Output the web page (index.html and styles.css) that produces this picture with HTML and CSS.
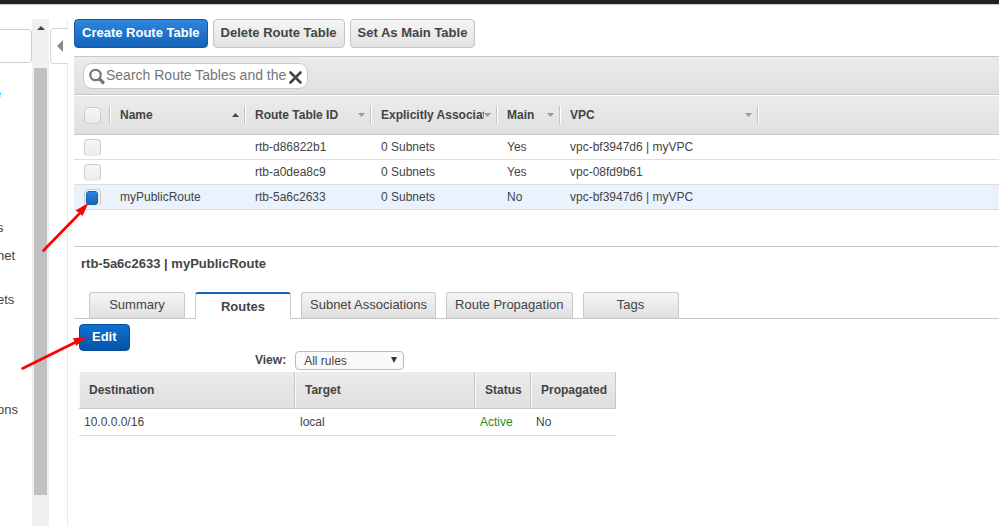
FILE: index.html
```html
<!DOCTYPE html>
<html lang="en">
<head>
<meta charset="utf-8">
<title>Route Tables</title>
<link rel="stylesheet" href="styles.css">
</head>
<body>
<header class="topbar"></header>
<div class="layout">
  <nav class="sidebar">
    <input class="filter" type="text" aria-label="Filter by VPC">
    <ul class="menu">
      <li class="current"><a href="#">e</a></li>
      <li><a href="#">s</a></li>
      <li><a href="#">net</a></li>
      <li class="spaced"><a href="#">ets</a></li>
      <li class="last"><a href="#">ons</a></li>
    </ul>
  </nav>
  <div class="scrollbar">
    <svg class="scroll-up" viewBox="0 0 8 4"><path d="M0 4L4 0L8 4Z" fill="#444"/></svg>
    <div class="thumb"></div>
  </div>
  <div class="gutter">
    <button class="collapse" aria-label="Collapse navigation"><svg width="6" height="12" viewBox="0 0 6 12"><path d="M6 0V12L0 6Z" fill="#8c8c8c"/></svg></button>
  </div>
  <main class="main">
    <div class="actions">
      <button class="btn primary">Create Route Table</button>
      <button class="btn">Delete Route Table</button>
      <button class="btn">Set As Main Table</button>
    </div>
    <div class="toolbar">
      <div class="search">
        <svg width="17" height="17" viewBox="0 0 17 17"><circle cx="6.500" cy="7" r="5.200" fill="none" stroke="#777" stroke-width="2.200"/><path d="M10.500 11L14 14.500" stroke="#777" stroke-width="3.200" stroke-linecap="round"/></svg>
        <input type="text" aria-label="Search" placeholder="Search Route Tables and their properties">
        <button class="clear" aria-label="Clear search"><svg width="13" height="13" viewBox="0 0 13 13"><path d="M1.500 1.500L11.500 11.500M11.500 1.500L1.500 11.500" stroke="#444" stroke-width="2.600" stroke-linecap="round"/></svg></button>
      </div>
    </div>
    <table class="list">
      <colgroup><col class="c-check"><col class="c-name"><col class="c-id"><col class="c-assoc"><col class="c-main"><col class="c-vpc"><col></colgroup>
      <thead>
        <tr>
          <th><div class="head"><input class="check" type="checkbox" aria-label="Select all"></div></th>
          <th><div class="head"><span>Name</span><svg class="sort" viewBox="0 0 7 4"><path d="M0 4L3.500 0L7 4Z" fill="#444"/></svg></div></th>
          <th><div class="head"><span>Route Table ID</span><svg class="sort" viewBox="0 0 7 4"><path d="M0 0H7L3.500 4Z" fill="#999"/></svg></div></th>
          <th><div class="head"><span>Explicitly Associated</span><svg class="sort" viewBox="0 0 7 4"><path d="M0 0H7L3.500 4Z" fill="#999"/></svg></div></th>
          <th><div class="head"><span>Main</span><svg class="sort" viewBox="0 0 7 4"><path d="M0 0H7L3.500 4Z" fill="#999"/></svg></div></th>
          <th><div class="head"><span>VPC</span><svg class="sort" viewBox="0 0 7 4"><path d="M0 0H7L3.500 4Z" fill="#999"/></svg></div></th>
          <th></th>
        </tr>
      </thead>
      <tbody>
        <tr><td><input class="check" type="checkbox" aria-label="Select rtb-d86822b1"></td><td></td><td>rtb-d86822b1</td><td>0 Subnets</td><td>Yes</td><td>vpc-bf3947d6 | myVPC</td><td></td></tr>
        <tr><td><input class="check" type="checkbox" aria-label="Select rtb-a0dea8c9"></td><td></td><td>rtb-a0dea8c9</td><td>0 Subnets</td><td>Yes</td><td>vpc-08fd9b61</td><td></td></tr>
        <tr class="selected"><td><input class="check" type="checkbox" checked aria-label="Select myPublicRoute"></td><td>myPublicRoute</td><td>rtb-5a6c2633</td><td>0 Subnets</td><td>No</td><td>vpc-bf3947d6 | myVPC</td><td></td></tr>
      </tbody>
    </table>
    <section class="detail">
      <h2>rtb-5a6c2633 | myPublicRoute</h2>
      <div class="tabs" role="tablist">
        <button class="tab" role="tab">Summary</button>
        <button class="tab active" role="tab" aria-selected="true">Routes</button>
        <button class="tab" role="tab">Subnet Associations</button>
        <button class="tab" role="tab">Route Propagation</button>
        <button class="tab" role="tab">Tags</button>
      </div>
      <div class="panel">
        <button class="btn primary edit">Edit</button>
        <div class="view">
          <label for="view">View:</label>
          <div class="picker">
            <select id="view"><option>All rules</option></select>
            <svg viewBox="0 0 6 6"><path d="M0 0H6L3 6Z" fill="#333"/></svg>
          </div>
        </div>
        <table class="routes">
          <colgroup><col class="r-dest"><col class="r-target"><col class="r-status"><col class="r-prop"></colgroup>
          <thead><tr><th>Destination</th><th>Target</th><th>Status</th><th>Propagated</th></tr></thead>
          <tbody><tr><td>10.0.0.0/16</td><td>local</td><td class="ok">Active</td><td>No</td></tr></tbody>
        </table>
      </div>
    </section>
  </main>
</div>
<svg class="arrows" width="100" height="380" viewBox="0 0 100 380">
  <g stroke="#f00" stroke-width="2.600" stroke-linecap="round" fill="none"><path d="M43.500 250.500L80 213"/><path d="M22.500 368.500L76 342"/></g>
  <g fill="#f00"><path d="M88.500 203L82.500 216L79.500 213L75.500 210.500Z"/><path d="M87 336.500L76 346L75 341.500L72.500 338.500Z"/></g>
</svg>
</body>
</html>
```

FILE: styles.css
```css
* { box-sizing: border-box; }
body {
  margin: 0;
  min-height: 100vh;
  display: flex;
  flex-direction: column;
  overflow: hidden;
  background: #fff;
  color: #444;
  font: 12px/16px "Liberation Sans", Arial, sans-serif;
}
button, input, select { font: inherit; color: inherit; margin: 0; }
.topbar { height: 5px; background: #222; border-bottom: 1px solid #ccc; }
.layout { flex: 1; display: flex; }

.sidebar { width: 32px; overflow: hidden; padding-top: 24px; }
.filter {
  display: block;
  width: 42px;
  height: 34px;
  margin-left: -10px;
  border: 1px solid #ccc;
  border-radius: 4px;
}
.menu { list-style: none; margin: 23px 0 0 -3px; padding: 0; font-size: 13px; }
.menu li { margin-bottom: 12px; }
.menu a { color: #444; text-decoration: none; }
.menu .current { margin: 0 0 118px -3px; }
.menu .current a { color: #00c8ff; }
.menu .spaced { margin-top: 28px; }
.menu .last { margin-top: 94px; }

.scrollbar { width: 17px; margin-top: 14px; padding: 7px 2px 31px; background: #f0f0f0; display: flex; flex-direction: column; gap: 38px; }
.scroll-up { width: 8px; height: 4px; align-self: center; }
.thumb { flex: 1; background: #c1c1c1; }

.gutter { width: 19px; margin-top: 14px; border-right: 1px solid #eaeaea; }
.collapse {
  display: flex;
  align-items: center;
  width: 18px;
  height: 36px;
  margin: 9px 0 0 1px;
  padding: 0 0 0 6px;
  border: 1px solid #d8d8d8;
  border-right: 0;
  border-radius: 4px 0 0 4px;
  background: #fff;
}

.main { flex: 1; min-width: 0; padding: 14px 0 0 6px; }
.actions { display: flex; gap: 5px; margin-bottom: 8px; }
.btn {
  height: 29px;
  padding: 0 7px 2px;
  border: 1px solid #c4c4c4;
  border-radius: 4px;
  background: linear-gradient(#f5f5f5, #e2e2e2);
  font-size: 13px;
  font-weight: bold;
}
.primary { border-color: #1357a6; background: linear-gradient(#2f86dc, #1463b8); color: #fff; }
.edit { height: 27px; padding: 0 12px 2px; border-color: #0a4d99; background: linear-gradient(#0f70cf, #0453a8); }

.toolbar { height: 39px; padding: 6px 9px; border: solid #c8c8c8; border-width: 1px 0; background: linear-gradient(#ececec, #dfdfdf); }
.search {
  display: flex;
  align-items: center;
  width: 225px;
  height: 26px;
  padding: 0 5px;
  border: 1px solid #c8c8c8;
  border-radius: 9px;
  background: #fff;
}
.search svg { flex: none; }
.search input { flex: 1; min-width: 0; height: 22px; padding: 0 0 2px; margin: 0 2px 0 0; border: 0; outline: 0; background: none; font-size: 14px; }
.search input::placeholder { color: #757575; }
.clear { display: flex; padding: 2px 0 0; border: 0; background: none; }

.list { width: 100%; table-layout: fixed; border-collapse: collapse; text-align: left; }
.c-check { width: 36px; }
.c-name { width: 135px; }
.c-id, .c-assoc { width: 126px; }
.c-main { width: 63px; }
.c-vpc { width: 198px; }
.list thead { background: linear-gradient(#ececec, #dfdfdf); }
.list th { height: 39px; padding: 0; border-top: 1px solid #fff; border-bottom: 1px solid #c8c8c8; }
.head { display: flex; align-items: center; height: 18px; padding: 0 5px 0 10px; border-right: 1px solid #c4c4c4; box-shadow: 1px 0 #fff; }
.head span { flex: 1; overflow: hidden; white-space: nowrap; }
.sort { flex: none; width: 7px; height: 4px; }
.list td { height: 25px; padding: 0 10px; border-bottom: 1px solid #ddd; white-space: nowrap; }
.selected { background: #eaf2fe; }
.check {
  appearance: none;
  display: block;
  flex: none;
  width: 17px;
  height: 17px;
  border: 1px solid #ccc;
  border-radius: 4px;
  background: linear-gradient(#f6f6f6, #ebebeb);
}
.list td .check { border-bottom-color: #ebebeb; }
.check:checked { padding: 1px 2px 2px 1px; }
.check:checked::before { content: ""; display: block; height: 12px; border: 1px solid #1463b8; border-radius: 3px; background: linear-gradient(#2f86dc, #1463b8); }

.detail { margin-top: 36px; border-top: 1px solid #c8c8c8; }
h2 { margin: 8px 7px 20px; font-size: 13px; line-height: 17px; }
.tabs { display: flex; gap: 10px; height: 27px; padding-left: 15px; border-bottom: 1px solid #c8c8c8; }
.tab {
  min-width: 96px;
  height: 26px;
  padding: 0 8px 2px;
  border: 1px solid #c8c8c8;
  border-bottom: 0;
  border-radius: 3px 3px 0 0;
  background: linear-gradient(#f5f5f5, #dfdfdf);
  font-size: 13px;
}
.active { height: 27px; padding: 0 8px; border-top: 2px solid #1463b8; background: #fff; font-weight: bold; }
.panel { padding: 5px; }
.edit { display: block; }
.view { display: flex; gap: 9px; padding-left: 176px; font-weight: bold; }
.view label { line-height: 18px; }
.picker { position: relative; font-weight: normal; }
.picker select { appearance: none; display: block; width: 109px; height: 19px; padding: 0 8px; border: 1px solid #bbb; border-radius: 4px; background: #fafafa; }
.picker svg { position: absolute; top: 6px; right: 7px; width: 6px; height: 6px; pointer-events: none; }
.routes { width: 537px; margin-top: 2px; table-layout: fixed; border-collapse: separate; border-spacing: 0; text-align: left; }
.r-dest { width: 216px; }
.r-target { width: 180px; }
.r-status { width: 56px; }
.routes th { height: 37px; padding: 0 10px; border: solid #c8c8c8; border-width: 0 1px 1px 0; box-shadow: inset 1px 0 #f8f8f8; background: linear-gradient(#ececec, #dfdfdf); }
.routes td { height: 27px; padding: 0 5px; border-bottom: 1px solid #ddd; }
.routes .ok { color: #1d8f1d; }

.arrows { position: absolute; top: 0; left: 0; pointer-events: none; }
```
